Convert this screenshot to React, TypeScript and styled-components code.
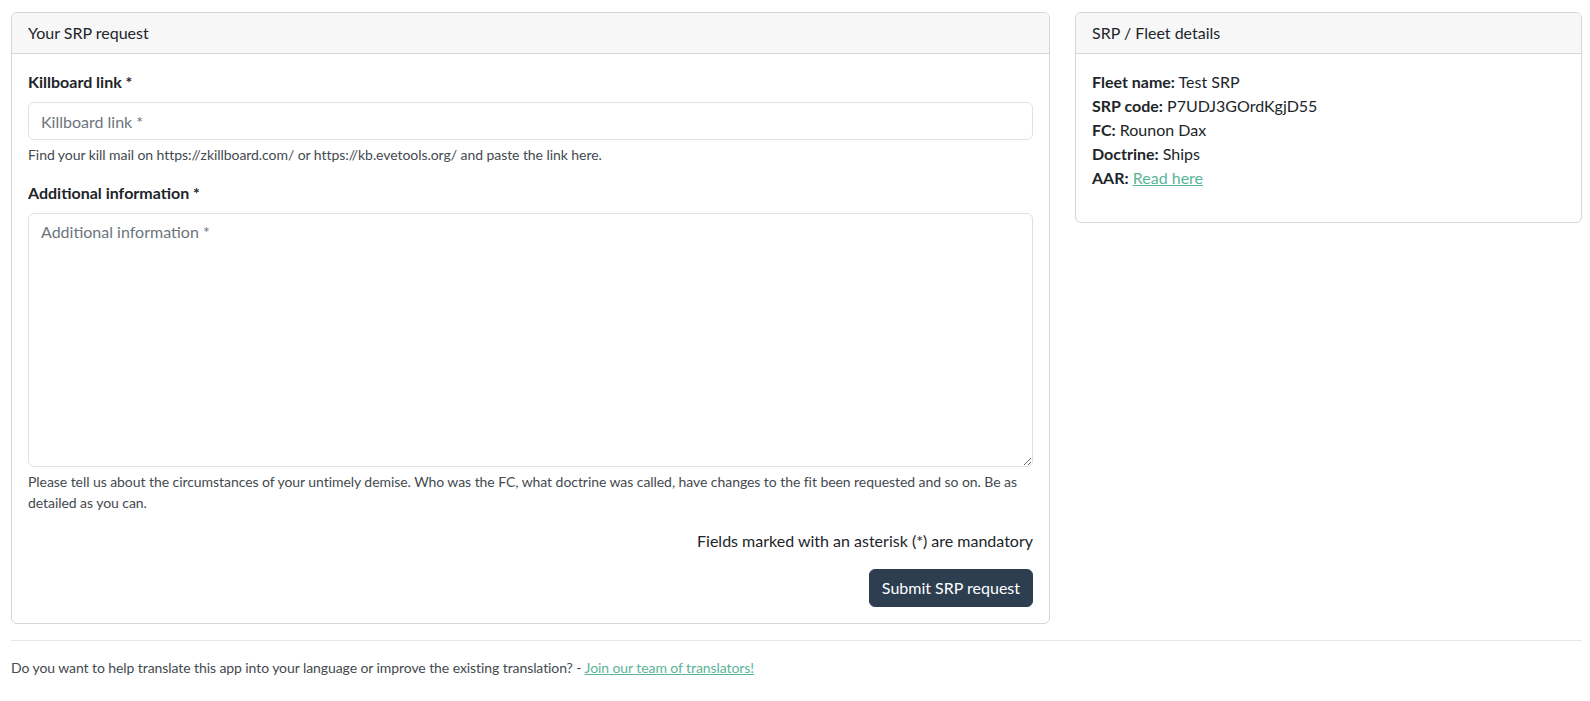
import React from "react";
import styled, { createGlobalStyle } from "styled-components";

const GlobalStyle = createGlobalStyle`
  *, *::before, *::after { box-sizing: border-box; }
  html, body { margin: 0; padding: 0; background: #fff; }
  body {
    font-family: Lato, "Open Sans", "Liberation Sans", sans-serif;
    font-size: 16px;
    line-height: 1.5;
    color: #212529;
  }
`;

const Page = styled.div`
  padding: 12px 8px 0 11px;
`;

const Row = styled.div`
  display: grid;
  grid-template-columns: 1039fr 507fr;
  column-gap: 25px;
  align-items: start;
`;

const Card = styled.section`
  border: 1px solid #d6d6d6;
  border-radius: 6px;
  background: #fff;
  overflow: hidden;
`;

const CardHeader = styled.div`
  padding: 8px 16px;
  background: #f7f7f7;
  border-bottom: 1px solid #d6d6d6;
  line-height: 24px;
`;

const CardBody = styled.div`
  padding: 16px;
`;

const Field = styled.div`
  margin-bottom: 16px;
`;

const Label = styled.label`
  display: block;
  font-weight: 700;
  margin-bottom: 8px;
  line-height: 24px;
`;

const controlStyles = `
  display: block;
  width: 100%;
  padding: 6px 12px;
  font-family: Lato, "Open Sans", "Liberation Sans", sans-serif;
  font-size: 16px;
  line-height: 24px;
  color: #212529;
  background: #fff;
  border: 1px solid #dee2e6;
  border-radius: 6px;
  outline: none;
  &::placeholder { color: #6c757d; }
`;

const Input = styled.input`
  ${controlStyles}
  height: 38px;
`;

const TextArea = styled.textarea`
  ${controlStyles}
  height: 254px;
  resize: vertical;
`;

const HelpText = styled.div`
  margin-top: 4px;
  font-size: 14px;
  line-height: 21px;
  letter-spacing: -0.06px;
  color: #444a50;
`;

const Mandatory = styled.p`
  margin: 0 0 16px;
  text-align: right;
  line-height: 24px;
`;

const Actions = styled.div`
  display: flex;
  justify-content: flex-end;
`;

const Button = styled.button`
  font-family: Lato, "Open Sans", "Liberation Sans", sans-serif;
  font-size: 16px;
  line-height: 24px;
  padding: 6px 12px;
  color: #fff;
  background: #2c3e50;
  border: 1px solid #2c3e50;
  border-radius: 6px;
  cursor: pointer;
`;

const Details = styled.div`
  margin-bottom: 16px;
`;

const DetailLine = styled.div`
  line-height: 24px;
`;

const Link = styled.a`
  color: #5ab598;
  text-decoration: underline;
`;

const Divider = styled.hr`
  margin: 16px 0;
  border: 0;
  border-top: 1px solid #e6e6e6;
`;

const Footer = styled.p`
  margin: 0;
  font-size: 14px;
  line-height: 21px;
  letter-spacing: -0.08px;
  color: #444a50;
`;

const details: [string, string][] = [
  ["Fleet name:", "Test SRP"],
  ["SRP code:", "P7UDJ3GOrdKgjD55"],
  ["FC:", "Rounon Dax"],
  ["Doctrine:", "Ships"],
];

export default function App() {
  return (
    <>
      <GlobalStyle />
      <Page>
        <Row>
          <Card>
            <CardHeader>Your SRP request</CardHeader>
            <CardBody>
              <Field>
                <Label htmlFor="kb">Killboard link *</Label>
                <Input id="kb" placeholder="Killboard link *" />
                <HelpText>
                  Find your kill mail on https://zkillboard.com/ or https://kb.evetools.org/ and paste the link here.
                </HelpText>
              </Field>
              <Field>
                <Label htmlFor="info">Additional information *</Label>
                <TextArea id="info" placeholder="Additional information *" />
                <HelpText>
                  Please tell us about the circumstances of your untimely demise. Who was the FC, what doctrine was called, have changes to the fit been requested and so on. Be as detailed as you can.
                </HelpText>
              </Field>
              <Mandatory>Fields marked with an asterisk (*) are mandatory</Mandatory>
              <Actions>
                <Button type="button">Submit SRP request</Button>
              </Actions>
            </CardBody>
          </Card>
          <Card>
            <CardHeader>SRP / Fleet details</CardHeader>
            <CardBody>
              <Details>
                {details.map(([k, v]) => (
                  <DetailLine key={k}>
                    <b>{k}</b> {v}
                  </DetailLine>
                ))}
                <DetailLine>
                  <b>AAR:</b> <Link href="#">Read here</Link>
                </DetailLine>
              </Details>
            </CardBody>
          </Card>
        </Row>
        <Divider />
        <Footer>
          Do you want to help translate this app into your language or improve the existing translation? -{" "}
          <Link href="#">Join our team of translators!</Link>
        </Footer>
      </Page>
    </>
  );
}
